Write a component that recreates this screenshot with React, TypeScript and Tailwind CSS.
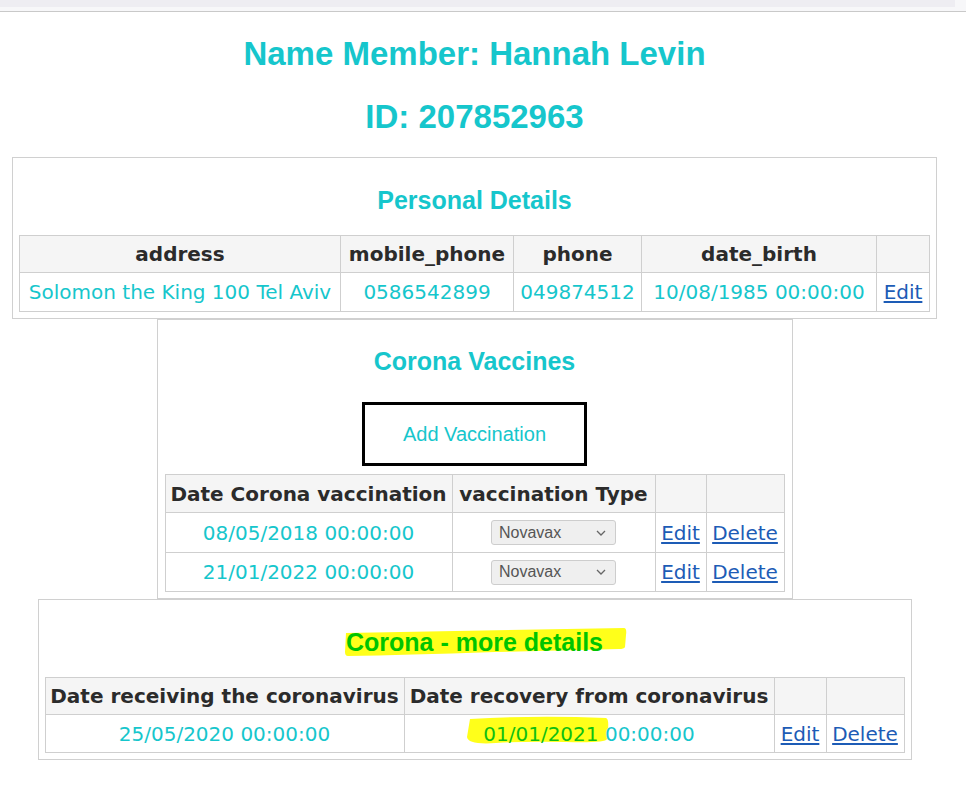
import type { ReactNode } from "react";

const TEAL = "text-[#16c6cc]";

function Th({ w, children }: { w: string; children?: ReactNode }) {
  return (
    <th className={`${w} border border-[#cfcfcf] bg-[#f5f5f5] px-[2px] text-center align-middle font-bold whitespace-nowrap text-[#2b2b2b]`}>
      {children}
    </th>
  );
}

function Td({ children, className = "" }: { children?: ReactNode; className?: string }) {
  return (
    <td className={`border border-[#cfcfcf] px-[4px] text-center align-middle whitespace-nowrap ${TEAL} ${className}`}>
      {children}
    </td>
  );
}

function Link({ children }: { children: ReactNode }) {
  return <a className="cursor-pointer text-[#1d5cb6] underline underline-offset-2">{children}</a>;
}

function Title({ children, className = "" }: { children: ReactNode; className?: string }) {
  return (
    <h2 className={`pt-[28px] pb-[21px] text-center font-['Liberation_Sans',Arial,sans-serif] text-[25px] leading-[28px] font-bold ${className}`}>
      {children}
    </h2>
  );
}

function NovaSelect() {
  return (
    <div className="mx-auto flex h-[25px] w-[125px] items-center justify-between rounded-[3px] border border-[#cdcdcd] bg-[#efefef] pr-[9px] pl-[7px] font-['Liberation_Sans',Arial,sans-serif] text-[16px] text-[#555]">
      <span>Novavax</span>
      <svg width="10" height="6" viewBox="0 0 10 6" fill="none" stroke="#666" strokeWidth="1.3">
        <path d="M1 1l4 4 4-4" />
      </svg>
    </div>
  );
}

export default function App() {
  return (
    <div className="min-h-[785px] w-[966px] bg-white font-['DejaVu_Sans',Verdana,sans-serif] text-[20px]">
      {/* browser-ish strip */}
      <div className="flex h-[12px] border-b border-[#c9c9c9] bg-[#f7f7f9]">
        <div className="h-[7px] w-[955px] bg-[#eeedf2]" />
      </div>

      <div className="w-[949px]">
        <h1 className={`mt-[23px] text-center font-['Liberation_Sans',Arial,sans-serif] text-[33px] leading-[37px] font-bold ${TEAL}`}>
          Name Member: Hannah Levin
        </h1>
        <h1 className={`mt-[26px] text-center font-['Liberation_Sans',Arial,sans-serif] text-[33px] leading-[37px] font-bold ${TEAL}`}>
          ID: 207852963
        </h1>

        {/* Personal Details */}
        <div className="mx-auto mt-[22px] w-fit border border-[#d0d0d0] px-[6px] pb-[6px]">
          <Title className={TEAL}>Personal Details</Title>
          <table className="border-collapse">
            <thead>
              <tr className="h-[37px]">
                <Th w="w-[321px]">address</Th>
                <Th w="w-[173px]">mobile_phone</Th>
                <Th w="w-[128px]">phone</Th>
                <Th w="w-[235px]">date_birth</Th>
                <Th w="w-[53px]" />
              </tr>
            </thead>
            <tbody>
              <tr className="h-[39px]">
                <Td>Solomon the King 100 Tel Aviv</Td>
                <Td>0586542899</Td>
                <Td>049874512</Td>
                <Td>10/08/1985 00:00:00</Td>
                <Td>
                  <Link>Edit</Link>
                </Td>
              </tr>
            </tbody>
          </table>
        </div>

        {/* Corona Vaccines */}
        <div className="mx-auto w-fit border border-[#d0d0d0] px-[7px] pb-[6px]">
          <h2 className={`pt-[27px] text-center font-['Liberation_Sans',Arial,sans-serif] text-[25px] leading-[28px] font-bold ${TEAL}`}>
            Corona Vaccines
          </h2>
          <div className="mt-[27px] mb-[8px] flex justify-center">
            <button className={`h-[64px] w-[225px] border-[3px] border-black bg-white font-['Liberation_Sans',Arial,sans-serif] text-[20px] ${TEAL}`}>
              Add Vaccination
            </button>
          </div>
          <table className="border-collapse">
            <thead>
              <tr className="h-[38px]">
                <Th w="w-[287px]">Date Corona vaccination</Th>
                <Th w="w-[203px]">vaccination Type</Th>
                <Th w="w-[51px]" />
                <Th w="w-[78px]" />
              </tr>
            </thead>
            <tbody>
              {["08/05/2018 00:00:00", "21/01/2022 00:00:00"].map((d, i) => (
                <tr key={d} className={i === 0 ? "h-[40px]" : "h-[39px]"}>
                  <Td>{d}</Td>
                  <Td>
                    <NovaSelect />
                  </Td>
                  <Td>
                    <Link>Edit</Link>
                  </Td>
                  <Td>
                    <Link>Delete</Link>
                  </Td>
                </tr>
              ))}
            </tbody>
          </table>
        </div>

        {/* Corona - more details */}
        <div className="mx-auto w-fit border border-[#d0d0d0] px-[6px] pb-[6px]">
          <h2 className="pt-[28px] pb-[21px] text-center font-['Liberation_Sans',Arial,sans-serif] text-[25px] leading-[28px] font-bold text-[#00c400]">
            <span className="relative inline-block">
              <svg
                className="absolute top-[-1px] left-[-1px] overflow-visible"
                width="282"
                height="30"
                viewBox="0 0 282 30"
              >
                <path d="M1 6 L279 1 Q282 1 281 8 L280 20 Q279 22 274 22 L150 25 Q60 28 3 29 Q0 29 0 25 Z" fill="#ffff1a" />
              </svg>
              <span className="relative">Corona - more details</span>
            </span>
          </h2>
          <table className="border-collapse">
            <thead>
              <tr className="h-[37px]">
                <Th w="w-[359px]">Date receiving the coronavirus</Th>
                <Th w="w-[370px]">Date recovery from coronavirus</Th>
                <Th w="w-[52px]" />
                <Th w="w-[78px]" />
              </tr>
            </thead>
            <tbody>
              <tr className="h-[38px]">
                <Td>25/05/2020 00:00:00</Td>
                <Td>
                  <span className="relative inline-block">
                    <svg
                      className="absolute top-[-4px] left-[-17px] overflow-visible"
                      width="143"
                      height="30"
                      viewBox="0 0 143 30"
                    >
                      <path d="M4 4 Q70 0 140 3 Q143 4 142 14 L141 24 Q140 28 100 27 Q60 26 30 28 Q2 30 1 22 Z" fill="#ffff1a" />
                    </svg>
                    <span className="relative text-[#10c010]">01/01/2021</span>
                  </span>
                  <span className="relative"> 00:00:00</span>
                </Td>
                <Td>
                  <Link>Edit</Link>
                </Td>
                <Td>
                  <Link>Delete</Link>
                </Td>
              </tr>
            </tbody>
          </table>
        </div>
      </div>
    </div>
  );
}
